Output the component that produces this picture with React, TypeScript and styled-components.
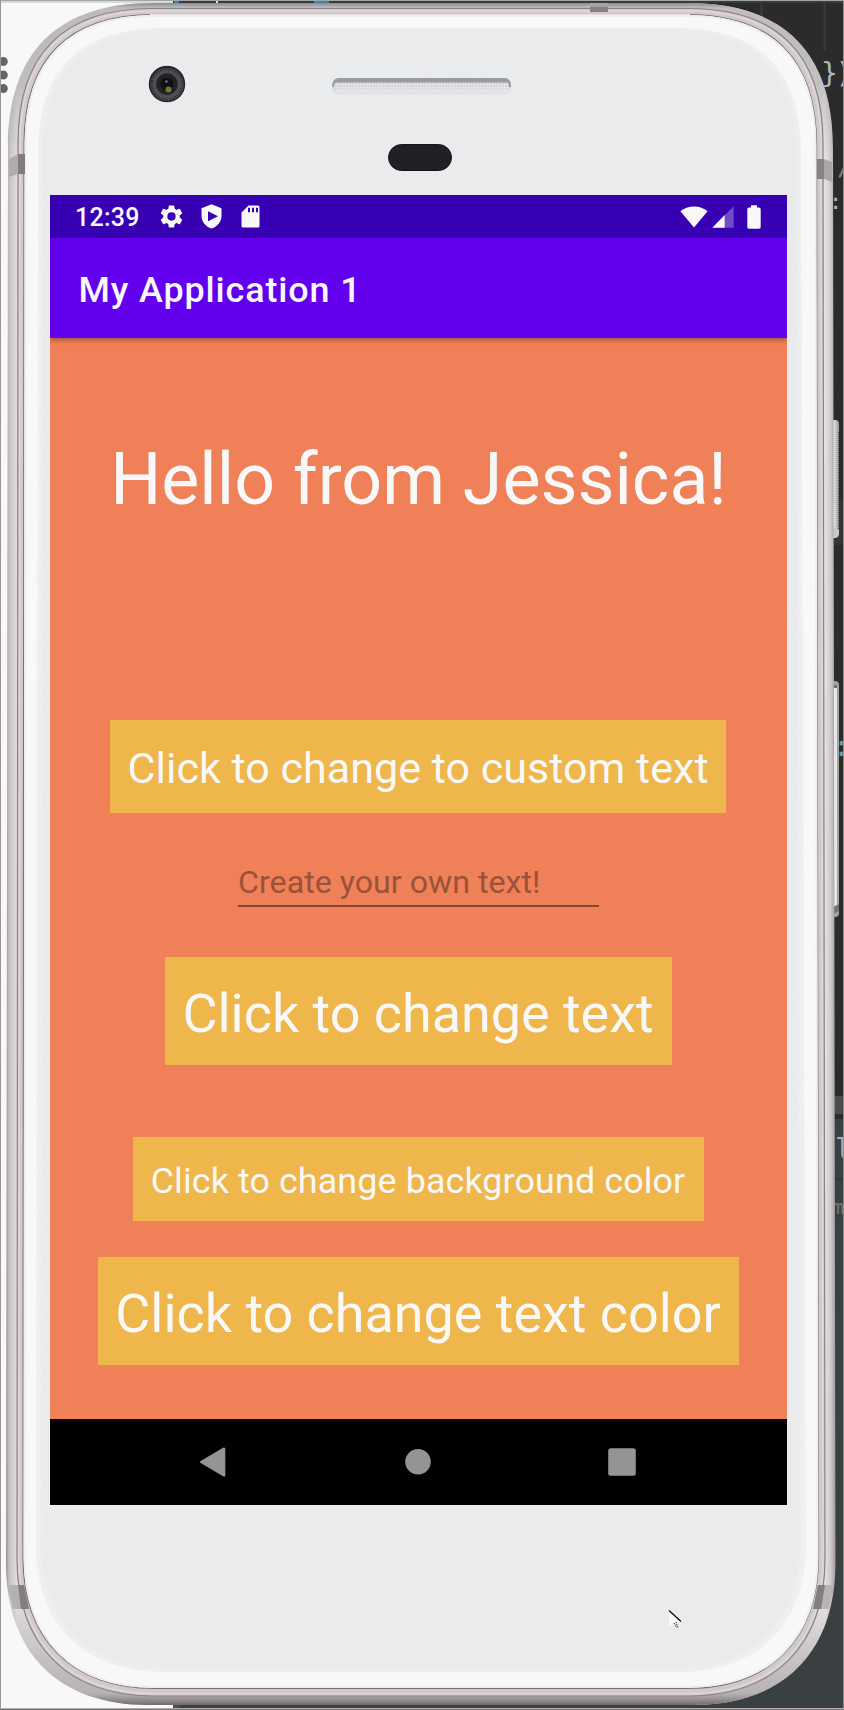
import React from "react";
import styled, { createGlobalStyle } from "styled-components";

const GlobalStyle = createGlobalStyle`
  * { box-sizing: border-box; }
  html, body { margin: 0; padding: 0; }
  body { font-family: Roboto, "Liberation Sans", sans-serif; background: #2b2b2b; }
`;

const Desktop = styled.div`
  position: relative;
  width: 844px;
  height: 1710px;
  overflow: hidden;
  display: flex;
  flex-direction: column;
  background:
    linear-gradient(#f8f8f8, #f8f8f8) 0 0 / 173px 100% no-repeat,
    linear-gradient(#2b2b2b 1096px, #4b4c4e 1096px 1114px, #2b2b2b 1114px 1119px, #3a3f42 1119px 1178px, #333537 1178px 1180px, #3a3f42 1180px);
`;

const Artwork = styled.svg`
  position: absolute;
  inset: 0;
  width: 844px;
  height: 1710px;
`;

const CodeFragment = styled.span<{ $x: number; $y: number; $color?: string; $size?: number }>`
  position: absolute;
  left: ${(p) => p.$x}px;
  top: ${(p) => p.$y}px;
  color: ${(p) => p.$color ?? "#a9b7c6"};
  font: ${(p) => p.$size ?? 28}px/32px "DejaVu Sans Mono", monospace;
  letter-spacing: -2px;
  white-space: pre;
`;

const Screen = styled.main`
  position: relative;
  width: 737px;
  height: 1310px;
  margin: 195px 0 0 50px;
  display: flex;
  flex-direction: column;
  color: #f8f8f8;
`;

const StatusBar = styled.header`
  height: 43px;
  padding: 0 26px 0 25px;
  background: #3700b3;
  display: flex;
  align-items: center;
  justify-content: space-between;
`;

const StatusGroup = styled.div`
  display: flex;
  align-items: center;
  height: 43px;
`;

const Clock = styled.time`
  width: 85px;
  font-size: 25px;
  font-weight: 500;
  line-height: 43px;
  padding-top: 1px;
  letter-spacing: 0.25px;
`;

const AppBar = styled.div`
  position: relative;
  z-index: 1;
  height: 100px;
  padding: 3px 0 0 28.5px;
  display: flex;
  align-items: center;
  background: #6200ee;
  box-shadow: 0 2px 5px rgba(60, 30, 10, 0.45);
  clip-path: inset(0 0 -10px 0);
`;

const AppTitle = styled.h1`
  margin: 0;
  font-size: 35.9px;
  line-height: 42px;
  font-weight: 500;
  letter-spacing: 0.88px;
`;

const Content = styled.section`
  height: 1081px;
  background: #f08058;
  display: flex;
  flex-direction: column;
  align-items: center;
`;

const Greeting = styled.h2`
  margin: 94px 0 0;
  height: 95px;
  font-size: 71.7px;
  line-height: 95px;
  font-weight: 400;
  white-space: nowrap;
`;

const ActionButton = styled.button<{ $w: number; $h: number; $size: number; $gap: number; $drop?: number; $track?: number }>`
  width: ${(p) => p.$w}px;
  height: ${(p) => p.$h}px;
  margin: ${(p) => p.$gap}px 1px 0 0;
  padding: ${(p) => p.$drop ?? 3}px 0 0;
  border: 0;
  background: #efb64b;
  color: #f8f8f8;
  font: 400 ${(p) => p.$size}px Roboto, "Liberation Sans", sans-serif;
  letter-spacing: ${(p) => p.$track ?? 0}px;
  white-space: nowrap;
`;

const TextField = styled.input`
  width: 361px;
  height: 56px;
  margin: 38px 0 0;
  padding: 7px 0 0;
  border: 0;
  border-bottom: 2px solid #824632;
  background: transparent;
  font: 400 32.2px Roboto, "Liberation Sans", sans-serif;
  &::placeholder { color: #9a5238; opacity: 1; }
`;

const NavBar = styled.nav`
  height: 86px;
  background: #000;
  display: flex;
  align-items: center;
  padding-left: 149px;
`;

const NavIcon = styled.svg<{ $gap?: number }>`
  width: 30px;
  height: 30px;
  margin-left: ${(p) => p.$gap ?? 0}px;
  fill: #969394;
`;

const StatusIcon = styled.svg<{ $w: number; $h: number; $gap?: number }>`
  width: ${(p) => p.$w}px;
  height: ${(p) => p.$h}px;
  margin-left: ${(p) => p.$gap ?? 0}px;
  fill: #f8f8f8;
`;

/* Outline of the body: the sides widen slightly towards the bottom. */
function outline(lt: number, lb: number, rt: number, rb: number, t: number, b: number, r: number, rbm = r) {
  const k = 0.66;
  const q = 0.63;
  return [
    `M${lt} ${t + r}`,
    `C${lt} ${t + r * (1 - k)} ${lt + r * (1 - k)} ${t} ${lt + r} ${t}`,
    `H${rt - r}`,
    `C${rt - r * (1 - k)} ${t} ${rt} ${t + r * (1 - k)} ${rt} ${t + r}`,
    `L${rb} ${b - rbm}`,
    `C${rb} ${b - rbm * (1 - q)} ${rb - rbm * (1 - q)} ${b} ${rb - rbm} ${b}`,
    `H${lb + rbm}`,
    `C${lb + rbm * (1 - q)} ${b} ${lb} ${b - rbm * (1 - q)} ${lb} ${b - rbm}Z`,
  ].join(" ");
}

function Handset() {
  return (
    <Artwork viewBox="0 0 844 1710">
      <defs>
        <linearGradient id="shellX" x1="6" x2="836" y1="0" y2="0" gradientUnits="userSpaceOnUse">
          <stop offset="0" stopColor="#969192" />
          <stop offset=".004" stopColor="#c7c1c2" />
          <stop offset=".013" stopColor="#e0dcdd" />
          <stop offset=".987" stopColor="#e4e1e2" />
          <stop offset=".994" stopColor="#cec7c9" />
          <stop offset="1" stopColor="#989394" />
        </linearGradient>
        <linearGradient id="shellY" x1="0" x2="0" y1="3" y2="1705" gradientUnits="userSpaceOnUse">
          <stop offset="0" stopColor="#8e8989" />
          <stop offset=".003" stopColor="#b4aeae" stopOpacity=".7" />
          <stop offset=".05" stopColor="#888" stopOpacity=".35" />
          <stop offset=".09" stopColor="#999" stopOpacity="0" />
          <stop offset=".94" stopColor="#999" stopOpacity="0" />
          <stop offset=".993" stopColor="#a59fa0" stopOpacity=".7" />
          <stop offset="1" stopColor="#706a6d" />
        </linearGradient>
        <filter id="soft"><feGaussianBlur stdDeviation="1.3" /></filter>
        <linearGradient id="grille" x1="0" x2="0" y1="78" y2="95" gradientUnits="userSpaceOnUse">
          <stop offset=".22" stopColor="#999ba3" />
          <stop offset=".3" stopColor="#d3d4d7" />
          <stop offset="1" stopColor="#e5e5e7" />
        </linearGradient>
        <pattern id="mesh" width="3" height="3" patternUnits="userSpaceOnUse">
          <rect width="1.4" height="1.4" fill="#f3f3f4" />
        </pattern>
        <linearGradient id="key" x1="0" x2="1" y1="0" y2="0">
          <stop offset="0" stopColor="#a5a2a2" />
          <stop offset=".5" stopColor="#e2e2e2" />
          <stop offset="1" stopColor="#9b9999" />
        </linearGradient>
      </defs>

      <rect x="1" y="1" width="172" height="2" fill="#d6d8e2" />
      <rect x="173" y="1" width="670" height="2" fill="#363b3d" />
      <path d="M174 1h5v2h-5zM314 1h15v2h-15z" fill="#348aa4" />
      <path d="M216 1h2v2h-2z" fill="#ddd" />
      <path d="M173 1705h7v3h-7z" fill="#315468" />
      <g fill="#60646b"><circle cx="3.3" cy="61.5" r="4.5" /><circle cx="3.3" cy="75" r="4.5" /><circle cx="3.3" cy="88.5" r="4.5" /></g>
      <path d="M761.5 1v30M824.5 1v49" stroke="#393b3c" strokeWidth="2" />
      <path d="M833 500h10v45h-10z" fill="#313536" />

      <rect x="829" y="420" width="10" height="118" rx="4" fill="url(#key)" />
      <path d="M838.5 432v98" stroke="#555" strokeDasharray="1 1" />
      <path d="M833 527l6 3v5l-5 2z" fill="#c9c7c7" />
      <rect x="828" y="681" width="11" height="236" rx="4" fill="#a5a1a2" />
      <rect x="832" y="686" width="5" height="220" fill="#e6e8e8" />
      <path d="M833 685h4v3h-4zM833 907l6-3v7l-6 3z" fill="#777374" />

      <path d={outline(8, 6, 833, 835.5, 3, 1705, 145, 142)} fill="url(#shellX)" />
      <path d={outline(8, 6, 833, 835.5, 3, 1705, 145, 142)} fill="url(#shellY)" />
      <path d={outline(18, 17, 823, 825, 8.5, 1696, 134, 137)} fill="#d1c9cc" stroke="#888384" strokeWidth="1.2" />
      <path d={outline(20, 19, 821, 823, 11, 1693.5, 132, 135)} fill="none" stroke="#ded8da" strokeWidth="1.5" />
      <path d={outline(24, 23, 816.5, 818.5, 14.5, 1688.5, 130, 132)} fill="#f8f8f8" stroke="#777173" strokeWidth="1.2" />
      <path d="M150 15H690" stroke="#e3dfe1" strokeWidth="2" />
      <path d={outline(25.5, 24.5, 815.5, 817.5, 16, 1687, 129, 130)} fill="none" stroke="#efeff1" strokeWidth="2" />
      <path d={outline(38, 36, 801, 806, 28, 1672, 124, 128)} fill="#eeeff1" />
      <path d={outline(42, 41, 797, 800, 30, 1669, 124, 126)} fill="#e9ebec" filter="url(#soft)" />

      <path d="M9 159l9-5h7v20h-7l-9 3z" fill="#b0abac" /><path d="M18 154h7v20h-7z" fill="#817b7e" />
      <path d="M817 159h7l8 3v20l-8-3h-7z" fill="#aaa5a7" /><path d="M817 159h7v20h-7z" fill="#888285" />
      <path d="M590 3h18v9h-18z" fill="#888285" /><path d="M590 3h18v4h-18z" fill="#a6a1a2" />
      <path d="M8 1585h16l5 24H13z" fill="#b5b0b1" /><path d="M18 1585h6l5 24h-8z" fill="#837d80" />
      <path d="M834 1585h-16l-5 24h16z" fill="#b8b3b4" /><path d="M825 1585h-7l-5 24h8z" fill="#837d80" />

      <circle cx="167" cy="84" r="19" fill="#f8f8f8" />
      <circle cx="167" cy="84" r="18.3" fill="#28292b" />
      <circle cx="167" cy="84.5" r="14" fill="#4a4b4f" stroke="#55565a" strokeWidth="5" strokeDasharray="1 1" />
      <circle cx="167" cy="84" r="10.7" fill="#222225" />
      <circle cx="167" cy="84" r="6.5" fill="#101012" />
      <circle cx="168.5" cy="89.5" r="3" fill="#77762f" />
      <circle cx="166.5" cy="81.5" r="1.2" fill="#778" />

      <rect x="332" y="78" width="179" height="17" rx="7" fill="url(#grille)" />
      <rect x="335" y="83" width="173" height="10" fill="url(#mesh)" />
      <path d="M333 87q0-7 6-7.500L504 79q6 0 6 8" fill="none" stroke="#979ba3" strokeWidth="2" />
      <rect x="388.500" y="144.500" width="63" height="26" rx="13" fill="#202124" stroke="#151417" />

      <path d="M669 1610v17l4-3 3-1 5-1z" fill="#f8f8f8" />
      <path d="M669 1610.500l12 11" stroke="#000" strokeWidth="1.200" />
      <path d="M674 1623l3 5M676 1622l2 6" stroke="#111" strokeDasharray="1 1" fill="none" />
      <path d="M.5 0V1710" stroke="#979797" /><path d="M843.500 0V1710" stroke="#8d8d8d" />
      <path d="M0 .5H844" stroke="#a5a5a5" /><path d="M0 1708.500H844" stroke="#b0acad" /><path d="M0 1709.500H844" stroke="#777" />
    </Artwork>
  );
}

export default function App() {
  return (
    <>
      <GlobalStyle />
      <Desktop>
        <CodeFragment $x={821} $y={58}>{"})"}</CodeFragment>
        <CodeFragment $x={837} $y={151} $size={25} $color="#808080">/</CodeFragment>
        <CodeFragment $x={829} $y={186} $size={22}>:-</CodeFragment>
        <CodeFragment $x={833} $y={731} $color="#6897bb">:</CodeFragment>
        <CodeFragment $x={835} $y={1134} $color="#a8b1b6">l</CodeFragment>
        <CodeFragment $x={832} $y={1191} $size={20} $color="#73777a">m</CodeFragment>
        <Handset />
        <Screen>
          <StatusBar>
            <StatusGroup>
              <Clock>12:39</Clock>
              <StatusIcon viewBox="2 2 20 20" $w={23} $h={23}>
                <path d="M19.140 12.940c.04-.3.06-.61.06-.94 0-.32-.02-.64-.07-.94l2.030-1.580a.49.49 0 0 0 .12-.61l-1.920-3.320a.488.488 0 0 0-.59-.22l-2.390.96c-.5-.38-1.030-.7-1.620-.94l-.36-2.540a.484.484 0 0 0-.48-.41h-3.840c-.24 0-.43.17-.47.41l-.36 2.540c-.59.24-1.130.57-1.620.94l-2.390-.96c-.22-.08-.47 0-.59.22L2.740 8.870c-.12.21-.08.47.12.61l2.030 1.580c-.05.3-.09.63-.09.94s.02.64.07.94l-2.030 1.580a.49.49 0 0 0-.12.61l1.920 3.320c.12.22.37.29.59.22l2.390-.96c.5.38 1.030.7 1.620.94l.36 2.540c.05.24.24.41.48.41h3.840c.24 0 .44-.17.47-.41l.36-2.540c.59-.24 1.130-.56 1.620-.94l2.390.96c.22.08.47 0 .59-.22l1.920-3.320c.12-.22.07-.47-.12-.61l-2.010-1.580zM12 15.600A3.610 3.610 0 0 1 8.400 12 3.610 3.610 0 0 1 12 8.400a3.610 3.610 0 0 1 3.600 3.600 3.610 3.610 0 0 1-3.600 3.600z" />
              </StatusIcon>
              <StatusIcon viewBox="0 0 21 25" $w={21} $h={25} $gap={18}>
                <path fillRule="evenodd" d="M10.500.3 20.500 4.200V12c0 6-4.300 10.600-10 12.600C4.800 22.600.5 18 .5 12V4.200zM7 7.200v10l10-5z" />
              </StatusIcon>
              <StatusIcon viewBox="0 0 19 23" $w={19} $h={23} $gap={19}>
                <path fillRule="evenodd" d="M7.500.5H17q1.500 0 1.500 1.500v19q0 1.500-1.500 1.500H2Q.5 22.500.5 21V7.500zM7 2.700v4.500h2V2.700zm4 0v4.500h2V2.700zm4 0v4.500h2V2.700z" />
              </StatusIcon>
            </StatusGroup>
            <StatusGroup>
              <StatusIcon viewBox="0 0 28 22" $w={28} $h={22}>
                <path d="M14 21.500.4 5.300Q6 .4 14 .4t13.600 4.900z" />
              </StatusIcon>
              <StatusIcon viewBox="0 0 22 22" $w={22} $h={22} $gap={4}>
                <path opacity=".3" d="M21.700.3v21.400H.3z" /><path d="M12.700 9v12.700H.3z" />
              </StatusIcon>
              <StatusIcon viewBox="0 0 14 24" $w={14} $h={24} $gap={13}>
                <path d="M4 .3h6v2.200h2q1.700 0 1.700 1.500v18q0 1.700-1.700 1.700H2Q.3 23.700.3 22V4Q.3 2.500 2 2.500h2z" />
              </StatusIcon>
            </StatusGroup>
          </StatusBar>
          <AppBar><AppTitle>My Application 1</AppTitle></AppBar>
          <Content>
            <Greeting>Hello from Jessica!</Greeting>
            <ActionButton $w={616} $h={93} $size={43.1} $gap={193}>Click to change to custom text</ActionButton>
            <TextField placeholder="Create your own text!" />
            <ActionButton $w={507} $h={108} $size={53.9} $gap={50} $drop={5}>Click to change text</ActionButton>
            <ActionButton $w={571} $h={84} $size={35.9} $gap={72} $track={0.1}>Click to change background color</ActionButton>
            <ActionButton $w={641} $h={108} $size={53.9} $gap={36} $drop={5}>Click to change text color</ActionButton>
          </Content>
          <NavBar>
            <NavIcon viewBox="0 0 30 30"><path d="M1.700 14q-1.700 1 0 2L24 29.300q2.300 1.200 2.300-1V2q0-2.200-2.300-1.200z" /></NavIcon>
            <NavIcon viewBox="0 0 30 30" $gap={174}><circle cx="15" cy="14.700" r="12.800" /></NavIcon>
            <NavIcon viewBox="0 0 30 30" $gap={174}><rect x="1.200" y="1.200" width="27.600" height="27.600" rx="2.500" /></NavIcon>
          </NavBar>
        </Screen>
      </Desktop>
    </>
  );
}
